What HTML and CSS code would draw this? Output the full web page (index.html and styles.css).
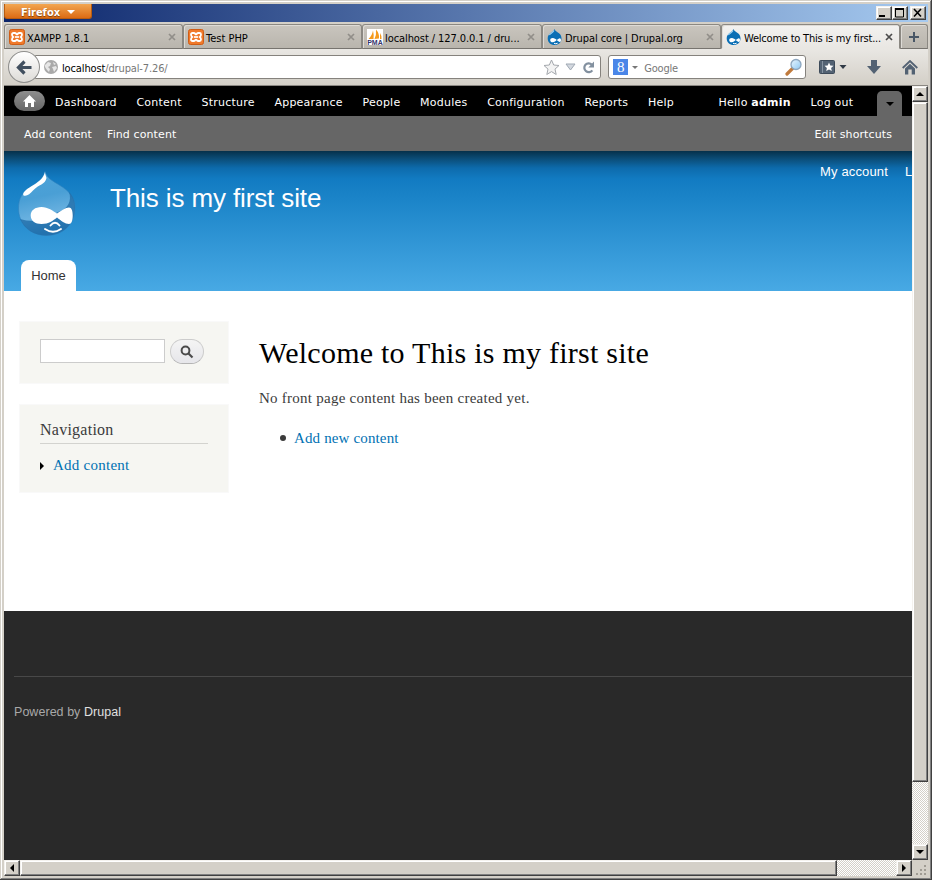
FILE: index.html
```html
<!DOCTYPE html>
<html lang="en">
<head>
<meta charset="utf-8">
<title>Welcome to This is my first site</title>
<link rel="stylesheet" href="styles.css">
</head>
<body>
<svg class="defs" width="0" height="0">
  <defs>
    <linearGradient id="dropFill" x1="0" y1="0" x2="0.2" y2="1"><stop offset="0" stop-color="#4ba3d9"/><stop offset=".45" stop-color="#4a9fd5"/><stop offset=".75" stop-color="#69b1e0"/><stop offset="1" stop-color="#3a8dc8"/></linearGradient>
    <linearGradient id="lens" x1="0" y1="0" x2="1" y2="1"><stop offset="0" stop-color="#e8f6ff"/><stop offset="1" stop-color="#8fc8f2"/></linearGradient>
  </defs>
  <symbol id="xampp" viewBox="0 0 16 16"><rect x=".5" y=".5" width="15" height="15" rx="2" fill="#f0792a" stroke="#cf5d16"/><path d="M4.500 4h1.500q1 0 1.300 1 .7.700 1.400 0Q9 4 10 4h1.500Q13 4 13 5.500 13 7 11.800 8q1.200 1 1.200 2.500 0 1.500-1.500 1.500H10q-1 0-1.300-1-.7-.7-1.400 0-.3 1-1.300 1H4.500Q3 12 3 10.500 3 9 4.200 8 3 7 3 5.500 3 4 4.500 4z" fill="none" stroke="#fff" stroke-width="1.800"/><path d="M6 8h4" stroke="#fff" stroke-width="1.700"/></symbol>
  <symbol id="drop" viewBox="0 0 16 16"><path d="M7.300 0C8 2 10 2.600 12 4.200c1.700 1.400 2.500 3.200 2.500 5.200 0 3.800-3 6.600-6.900 6.600S.7 13.200.7 9.400c0-2.300 1-4 2.600-5.200C5 3 6.700 2.200 7.300 0z" fill="#0a6fb5"/><path d="M7 1.500C6 3.700 3.600 4 2.300 6" stroke="#9fd2f2" stroke-width="1.200" fill="none"/><path d="M9.800 11.100C8.600 12 7.400 13.300 5.800 13.300c-1.600 0-2.600-.9-2.600-2.100s1-2.100 2.600-2.100c1.600 0 2.900 1.100 4 2 1-.8 2-1.900 3-1.900.8 0 1.200.8 1.200 1.900s-.4 2-1.200 2c-1 0-2-1.100-3-2z" fill="#fff"/><path d="M7 14.300q1.800 1 3.600-.1" stroke="#fff" fill="none"/></symbol>
  <symbol id="close" viewBox="0 0 8 8"><path d="M1 1l6 6M7 1L1 7" stroke="currentColor" stroke-width="1.700"/></symbol>
</svg>
<div class="window">
  <header class="titlebar">
    <button class="firefox">Firefox<i class="caret"></i></button>
    <div class="winbtns">
      <span class="bevel"><svg width="12" height="10"><path d="M1 8h6" stroke="#000" stroke-width="2"/></svg></span>
      <span class="bevel"><svg width="12" height="10"><path d="M1.500 1v8h8V1M1 1h9" fill="none" stroke="#000"/><path d="M1 1h9" stroke="#000" stroke-width="2"/></svg></span>
      <span class="bevel last"><svg width="12" height="10"><path d="M2 1l7 7.500M9 1L2 8.500" stroke="#000" stroke-width="1.600"/></svg></span>
    </div>
  </header>
  <nav class="tabs">
    <div class="tab"><svg class="fav"><use href="#xampp"/></svg><span>XAMPP 1.8.1</span><svg class="x"><use href="#close"/></svg></div>
    <div class="tab"><svg class="fav"><use href="#xampp"/></svg><span>Test PHP</span><svg class="x"><use href="#close"/></svg></div>
    <div class="tab wide"><svg class="fav" viewBox="0 0 16 16"><rect width="16" height="16" fill="#fff"/><path d="M1.500 10Q5 7 6 1.500q1 4 .5 8.500zM7.500 10Q9.500 6 9 .5q3.500 4 3 9zM13 10V4q2 3 1.500 6z" fill="#f59a1c"/><text x=".2" y="16" class="pma">PMA</text></svg><span class="tight">localhost / 127.0.0.1 / dru...</span><svg class="x"><use href="#close"/></svg></div>
    <div class="tab"><svg class="fav"><use href="#drop"/></svg><span class="tight">Drupal core | Drupal.org</span><svg class="x"><use href="#close"/></svg></div>
    <div class="tab active"><svg class="fav"><use href="#drop"/></svg><span>Welcome to This is my first...</span><svg class="x"><use href="#close"/></svg></div>
    <div class="tab plus"><svg width="12" height="12"><path d="M6 1v10M1 6h10" stroke="#495766" stroke-width="2"/></svg></div>
  </nav>
  <div class="navbar">
    <div class="back"><svg width="16" height="15" viewBox="0 0 16 15"><path d="M8.500 1.500L2.500 7.500l6 6M3 7.500h12.500" fill="none" stroke="#414f5f" stroke-width="3.200"/></svg></div>
    <div class="url">
      <svg width="14" height="14" viewBox="0 0 14 14"><circle cx="7" cy="7" r="7" fill="#a9a9a9"/><path d="M1 5l3-3 3 1-1 3-2 1 2 2-1 3-2-2-2-3zM9 2l3 2-2 1zM8 7l4-1 1 2-3 4-1-3z" fill="#e6e6e6"/></svg>
      <span class="addr"><b>localhost</b>/drupal-7.26/</span>
      <svg class="star" width="17" height="17" viewBox="0 0 17 17"><path d="M8.500 1l2.200 5 5.300.500-4 3.600 1.200 5.400-4.700-2.900-4.700 2.900L5 10.100 1 6.500 6.300 6z" fill="#f3f3f3" stroke="#a4a8ad"/></svg>
      <svg class="drop" width="11" height="8"><path d="M1 1h9L5.500 7z" fill="#d3d8df" stroke="#9fa8b3"/></svg>
      <svg width="13" height="13" viewBox="0 0 13 13"><path d="M9.800 3.600A4.400 4.400 0 1 0 10.300 9.300" fill="none" stroke="#82909f" stroke-width="2.200"/><path d="M12 .5v6H6.300z" fill="#82909f"/></svg>
    </div>
    <div class="search">
      <span class="g">8</span><i class="caret"></i><span class="hint">Google</span>
      <svg width="18" height="18" viewBox="0 0 18 18"><path d="M2 16l5.500-5.500" stroke="#c07a3c" stroke-width="3.200" stroke-linecap="round"/><circle cx="11" cy="6.500" r="5" fill="url(#lens)" stroke="#8da6be" stroke-width="1.300"/></svg>
    </div>
    <svg class="bm" width="28" height="15" viewBox="0 0 28 15"><rect x=".5" y=".5" width="15" height="13" rx="1" fill="#536273" stroke="#3d4a59"/><path d="M3.500 1v12" stroke="#8794a2"/><path d="M10 2.500l1.300 3 3.200.3-2.400 2.100.7 3.100L10 9.400 7.200 11l.7-3.100-2.400-2.100 3.200-.3z" fill="#fff"/><path d="M20.500 5h7l-3.500 4z" fill="#303a46"/></svg>
    <svg class="dl" width="14" height="15" viewBox="0 0 14 15"><path d="M4 0h6v6h4l-7 8-7-8h4z" fill="#536273"/></svg>
    <svg class="hm" width="16" height="15" viewBox="0 0 16 15"><path d="M.7 8L8 1l7.300 7" fill="none" stroke="#536273" stroke-width="1.800"/><path d="M3 8.500l5-4.700 5 4.700V14.500H9.700V9.500H6.300v5H3z" fill="#536273"/></svg>
  </div>
  <div class="viewport">
    <div class="page">
      <div class="toolbar">
        <span class="home"><svg width="13" height="12" viewBox="0 0 13 12"><path d="M6.500 0L13 6.500h-2V12H8V8H5v4H2V6.500H0z" fill="#fff"/></svg></span>
        <a>Dashboard</a><a>Content</a><a>Structure</a><a>Appearance</a><a>People</a><a>Modules</a><a>Configuration</a><a>Reports</a><a>Help</a>
        <a class="hello">Hello <b>admin</b></a><a>Log out</a>
        <span class="toggle"><i class="caret"></i></span>
      </div>
      <div class="shortcuts"><a>Add content</a><a>Find content</a><a class="edit">Edit shortcuts</a></div>
      <div class="header">
        <div class="brand">
          <svg class="logo" width="58" height="66" viewBox="0 0 58 66">
            <path d="M27 .5C29 8 36 10.500 42 14.500 51 20 57 26 57 37 57 53 45 64.500 28.500 64.500S.5 53 .5 37C.5 27 5 21 11 17 17.500 12.500 25 9 27 .5z" fill="url(#dropFill)" stroke="#2f82bd" stroke-width=".6"/>
            <path d="M51 21c3 9-1 17-11 20-7 4-12 10-24 9-6 0-10-1-14-2C7 59 17 64.500 28.500 64.500 45 64.500 57 53 57 37c0-7-2-12-6-16z" fill="#1c6aa6" opacity=".75"/>
            <path d="M27 1c0 2 1 4 1.500 6C27 14 21 13 15 19.500c-3 3.500-6 6-9.500 5C4 22 8 18.500 13 15.500 20 11.500 25.500 7.500 27 1z" fill="#fff"/>
            <path d="M39 46.500C35 49.500 31 53 23.500 53 17 53 12.700 49.500 12.700 44.500S17 36 23.500 36C30 36 35 40 39 42.500c4-2.500 8.500-6 12-6 2.500 0 3.700 3 3.700 8S53.500 53 51 53C47 53 43 49.500 39 46.500z" fill="#fff"/>
            <path d="M32.500 54.500q4.500-5.500 9 0M27 58q8 5.500 16 0" fill="none" stroke="#fff" stroke-width="1.900" stroke-linecap="round"/>
          </svg>
          <h1>This is my first site</h1>
          <div class="user"><a>My account</a><a>Log out</a></div>
        </div>
        <div class="menu"><a>Home</a></div>
      </div>
      <div class="main">
        <aside>
          <div class="block find"><input type="text" aria-label="Search"><button aria-label="Search"><svg width="14" height="14"><circle cx="5.500" cy="5.500" r="3.900" fill="none" stroke="#4b4b4b" stroke-width="2"/><path d="M8.500 8.500l4 4" stroke="#4b4b4b" stroke-width="2.200"/></svg></button></div>
          <div class="block nav"><h2>Navigation</h2><p><i class="arrow"></i><a>Add content</a></p></div>
        </aside>
        <section>
          <h2>Welcome to This is my first site</h2>
          <p>No front page content has been created yet.</p>
          <div class="item"><i class="dot"></i><a>Add new content</a></div>
        </section>
      </div>
      <footer><div>Powered by <a>Drupal</a></div></footer>
    </div>
    <div class="vbar">
      <span class="bevel"><i class="up"></i></span><span class="bevel thumb"></span><span class="space"></span><span class="bevel"><i class="down"></i></span>
    </div>
  </div>
  <div class="hbar">
    <span class="bevel"><i class="left"></i></span><span class="bevel thumb"></span><span class="space"></span><span class="bevel"><i class="right"></i></span>
    <svg class="grip" width="16" height="16"><path d="M12 5h2v2h-2zM8 9h2v2H8zM12 9h2v2h-2zM4 13h2v2H4zM8 13h2v2H8zM12 13h2v2h-2z" fill="#a09c94"/></svg>
  </div>
</div>
</body>
</html>
```
FILE: styles.css
```css
* { box-sizing: border-box; }
body { margin: 0; width: 932px; height: 880px; overflow: hidden; font: 11px "DejaVu Sans", Verdana, sans-serif; }
h1, h2, p { margin: 0; font-weight: normal; }
svg { flex: none; display: block; }
button { padding: 0; font: inherit; }
span, a, h1, h2, p { white-space: nowrap; }
.defs { position: absolute; }

.window { height: 880px; padding: 4px 4px 4px; background: #d4d0c8; box-shadow: inset -1px -1px #404040, inset 1px 1px #d4d0c8, inset -2px -2px #808080, inset 2px 2px #fff; }
.titlebar { height: 18px; display: flex; justify-content: space-between; background: linear-gradient(90deg, #0a246a, #a6caf0); }
.firefox { width: 88px; height: 15px; border: 1px solid #b85c10; border-top: 0; border-radius: 0 0 3px 3px; background: linear-gradient(#f2a650, #dc6b14); color: #fff; font-weight: bold; font-family: "DejaVu Sans Condensed", "DejaVu Sans", sans-serif; display: flex; align-items: center; justify-content: center; gap: 7px; text-shadow: 0 1px 1px #7a3a05; padding-top: 2px; }
.caret { width: 0; height: 0; border: 4px solid transparent; border-bottom: 0; border-top-color: currentColor; flex: none; }
.winbtns { display: flex; padding: 2px 2px 0 0; }
.bevel { flex: none; display: flex; align-items: center; justify-content: center; background: #d4d0c8; border: 1px solid; border-color: #f4f2ee #404040 #404040 #f4f2ee; box-shadow: inset -1px -1px #808080, inset 1px 1px #fff; }
.winbtns .bevel { width: 16px; height: 14px; }
.winbtns .last { margin-left: 2px; }

.tabs { height: 27px; padding-top: 2px; display: flex; font-family: "DejaVu Sans Condensed", "DejaVu Sans", sans-serif; }
.tab { width: 179px; height: 25px; padding: 0 6px 0 4px; display: flex; align-items: center; border: 1px solid #8b8882; border-bottom-color: #77746f; border-radius: 3px 3px 0 0; background: linear-gradient(#c9c5be, #b9b5ad); box-shadow: inset 1px 1px #dedbd6; white-space: nowrap; }
.tab span { padding-top: 3px; }
.tab .tight { letter-spacing: -.08px; }
.tab.wide { width: 180px; }
.tab.active { background: linear-gradient(#f3f2f0, #e9e7e3); border-bottom-color: #e9e7e3; letter-spacing: -.21px; }
.tab.plus { width: 28px; padding: 0; justify-content: center; }
.fav { width: 16px; height: 16px; margin-right: 2px; }
.x { width: 8px; height: 8px; margin-left: auto; color: #918e89; }
.active .x { color: #4b4b4b; }
.pma { font: bold 7px "Liberation Sans", sans-serif; fill: #33336b; }

.navbar { height: 37px; padding: 0 10px 0 4px; display: flex; align-items: center; background: linear-gradient(#e9e7e3, #d3cfc7); border-bottom: 1px solid #8a8782; }
.back { z-index: 1; width: 32px; height: 32px; border: 1px solid #8e8e8c; border-radius: 50%; background: linear-gradient(#fff, #dddbd7); display: flex; align-items: center; justify-content: center; }
.url { width: 567px; height: 24px; margin-left: -5px; padding: 0 5px 0 8px; display: flex; align-items: center; background: #fff; border: 1px solid #85827d; border-radius: 0 3px 3px 0; color: #777; font-family: "DejaVu Sans Condensed", "DejaVu Sans", sans-serif; }
.url b { font-weight: normal; color: #000; }
.addr { margin-left: 4px; padding-top: 2px; letter-spacing: -.13px; }
.star { margin-left: auto; }
.drop { margin: 0 6px 0 5px; }
.search { width: 198px; height: 24px; margin-left: 7px; padding: 0 2px 0 4px; display: flex; align-items: center; background: #fff; border: 1px solid #85827d; border-radius: 3px; color: #777; font-family: "DejaVu Sans Condensed", "DejaVu Sans", sans-serif; }
.hint { padding-top: 2px; letter-spacing: -.2px; }
.g { width: 15px; height: 16px; background: #4a86e8; color: #fff; font: 15px/16px "Liberation Serif", serif; text-align: center; }
.search .caret { border-width: 3px 3px 0; margin: 0 6px 0 4px; }
.search svg { margin-left: auto; }
.bm { margin-left: 13px; }
.dl { margin-left: 20px; }
.hm { margin-left: 21px; }

.viewport { height: 774px; display: flex; }
.page { width: 908px; height: 774px; overflow: hidden; background: #fff; }
.toolbar { height: 30px; padding-left: 10px; display: flex; align-items: center; background: #000; color: #fff; line-height: 32px; }
.toolbar a { margin-right: 19.7px; padding-top: 3px; letter-spacing: .23px; }
.home { width: 31px; height: 20px; margin-right: 10px; border-radius: 10px; background: linear-gradient(#8e8e8e, #666); display: flex; align-items: center; justify-content: center; }
.toolbar .hello { margin-left: auto; }
.toggle { width: 25px; height: 25px; margin: 5px 10px 0 4px; background: #666; border-radius: 5px 5px 0 0; color: #000; display: flex; align-items: center; justify-content: center; }
.shortcuts { height: 35px; padding: 0 20px; display: flex; gap: 15px; background: #666; color: #fff; line-height: 37px; letter-spacing: .1px; }
.edit { margin-left: auto; }
.header { height: 140px; background: linear-gradient(#06304a 0, #0b4a73 7px, #0d6bac 17px, #127bc2 28px, #1c85c9 50px, #48a9e4 140px); font-family: "Liberation Sans", Arial, sans-serif; }
.brand { height: 109px; display: flex; align-items: flex-start; color: #fffeff; }
.logo { margin: 20px 0 0 14px; }
h1 { margin: 32px 0 0 34px; font-size: 26px; line-height: 30px; letter-spacing: -.12px; }
.user { width: 92px; margin: 13px 0 0 auto; display: flex; gap: 17px; overflow: hidden; font-size: 13px; line-height: 16px; letter-spacing: .15px; }
.menu { padding-left: 17px; display: flex; }
.menu a { width: 55px; height: 31px; border-radius: 8px 8px 0 0; background: #fff; color: #333; font-size: 13px; line-height: 31px; text-align: center; }
.main { height: 320px; padding: 30px 15px 0; display: flex; gap: 30px; color: #3b3b3b; font: 15px/20px "Liberation Serif", Georgia, serif; letter-spacing: .25px; }
.main a { color: #0071b3; }
aside { width: 210px; }
.block { width: 210px; background: #f6f6f2; border: 1px solid #f9f9f9; padding: 0 20px; }
.find { height: 63px; padding-top: 17px; display: flex; gap: 5px; }
.find input { width: 125px; height: 24px; border: 1px solid #ccc; background: #fff; }
.find button { flex: none; width: 34px; height: 25px; border: 1px solid #ccc; border-bottom-color: #b4b4b4; border-radius: 13px; background: linear-gradient(#f4f4f4, #e6e6ea); display: flex; align-items: center; justify-content: center; }
.nav { height: 89px; margin-top: 20px; padding-top: 15px; }
.nav h2 { font-size: 16px; height: 24px; line-height: 20px; border-bottom: 1px solid #d3d3cf; }
.nav p { display: flex; align-items: center; margin-top: 11px; }
.arrow { border: 4px solid transparent; border-left-color: #000; border-right: 0; margin: 2px 9px 0 0; }
section h2 { margin-top: 15px; color: #000; font-size: 30px; line-height: 34px; }
section p { margin-top: 18px; }
.item { display: flex; align-items: center; margin: 20px 0 0 21px; letter-spacing: .14px; }
.dot { width: 6px; height: 6px; margin-right: 8px; border-radius: 50%; background: #3b3b3b; }
footer { height: 249px; padding: 65px 0 0 10px; background: #292929; color: #a8a8a8; font: 12.5px/16px "Liberation Sans", Arial, sans-serif; letter-spacing: .04px; }
footer div { border-top: 1px solid #484848; padding-top: 27px; }
footer a { color: #e0e0e0; }

.vbar { width: 16px; display: flex; flex-direction: column; }
.vbar .bevel { width: 16px; height: 16px; }
.vbar .thumb { height: 680px; }
.space { flex: 1; background: repeating-conic-gradient(#fff 0 25%, #d4d0c8 0 50%) 0 0 / 2px 2px; }
.hbar { height: 16px; display: flex; background: #d4d0c8; }
.hbar .bevel { width: 16px; height: 16px; }
.hbar .thumb { width: 817px; }
.up, .down, .left, .right { border: 4px solid transparent; }
.up { border-top: 0; border-bottom-color: #000; }
.down { border-bottom: 0; border-top-color: #000; }
.left { border-left: 0; border-right-color: #000; }
.right { border-right: 0; border-left-color: #000; }
```
